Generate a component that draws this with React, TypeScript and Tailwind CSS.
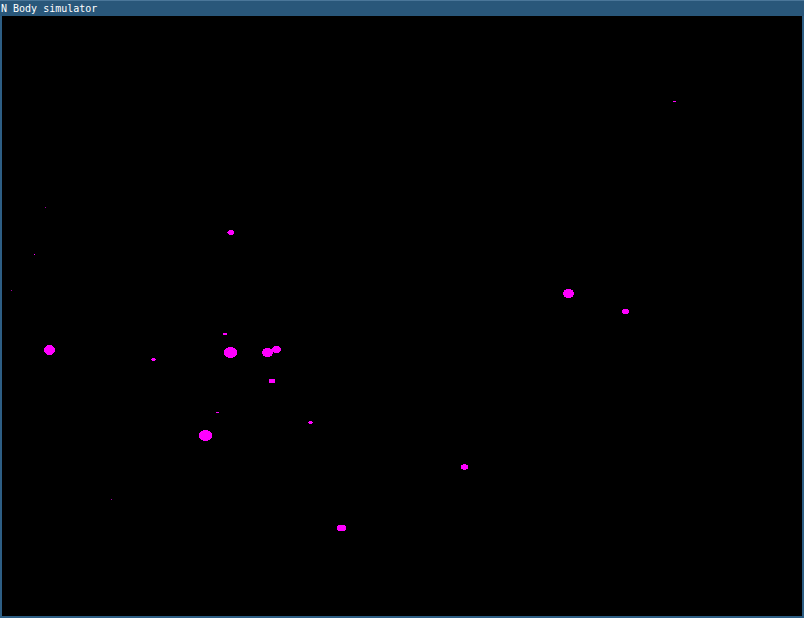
import React from 'react';

type Body = { x: number; y: number; rx: number; ry: number; dim?: boolean };

// positions in canvas coordinates (canvas origin at page 2,16)
const bodies: Body[] = [
  { x: 229, y: 216.5, rx: 3.5, ry: 2.5 },
  { x: 566.5, y: 277.5, rx: 5.5, ry: 4.5 },
  { x: 623.5, y: 295.5, rx: 3.5, ry: 2.5 },
  { x: 47.5, y: 334, rx: 5.5, ry: 5 },
  { x: 228.5, y: 336.5, rx: 6.5, ry: 5.5 },
  { x: 265.5, y: 336.5, rx: 5.5, ry: 4.5 },
  { x: 274.5, y: 333.5, rx: 4.5, ry: 3.5 },
  { x: 223, y: 318, rx: 2, ry: 1.2 },
  { x: 151.5, y: 343.5, rx: 2.5, ry: 1.5 },
  { x: 270, y: 365, rx: 3.5, ry: 2.5 },
  { x: 215.5, y: 396.5, rx: 1.5, ry: 0.8 },
  { x: 308.5, y: 406.5, rx: 2.5, ry: 1.5 },
  { x: 203.5, y: 419.5, rx: 6.5, ry: 5.5 },
  { x: 462.5, y: 451, rx: 3.5, ry: 2.8 },
  { x: 339.5, y: 512, rx: 4.5, ry: 3.5 },
];

// single-pixel specks
const specks = [
  { x: 671, y: 85, w: 3, c: '#ff00ff' },
  { x: 43, y: 191, w: 1, c: '#a000a0' },
  { x: 32, y: 238, w: 1, c: '#ff00ff' },
  { x: 9, y: 274, w: 1, c: '#a000a0' },
  { x: 109, y: 483, w: 1, c: '#a000a0' },
];

const App = () => {
  return (
    <div className="w-[804px] h-[618px] bg-[#2d5e84] flex flex-col overflow-hidden">
      <div className="h-[16px] bg-[#29577a] border-t border-[#4a7699] flex items-center px-[1px]">
        <span
          className="text-white text-[10px] leading-none"
          style={{ fontFamily: '"DejaVu Sans Mono", "Liberation Mono", monospace' }}
        >
          N Body simulator
        </span>
      </div>
      <div className="mx-[2px] w-[800px] h-[600px] bg-black">
        <svg width="800" height="600" viewBox="0 0 800 600" shapeRendering="crispEdges">
          {bodies.map((b, i) => (
            <ellipse key={i} cx={b.x} cy={b.y} rx={b.rx} ry={b.ry} fill={b.dim ? '#a000a0' : '#ff00ff'} />
          ))}
          {specks.map((s, i) => (
            <rect key={`s${i}`} x={s.x} y={s.y} width={s.w} height={1} fill={s.c} />
          ))}
        </svg>
      </div>
    </div>
  );
};

export default App;
